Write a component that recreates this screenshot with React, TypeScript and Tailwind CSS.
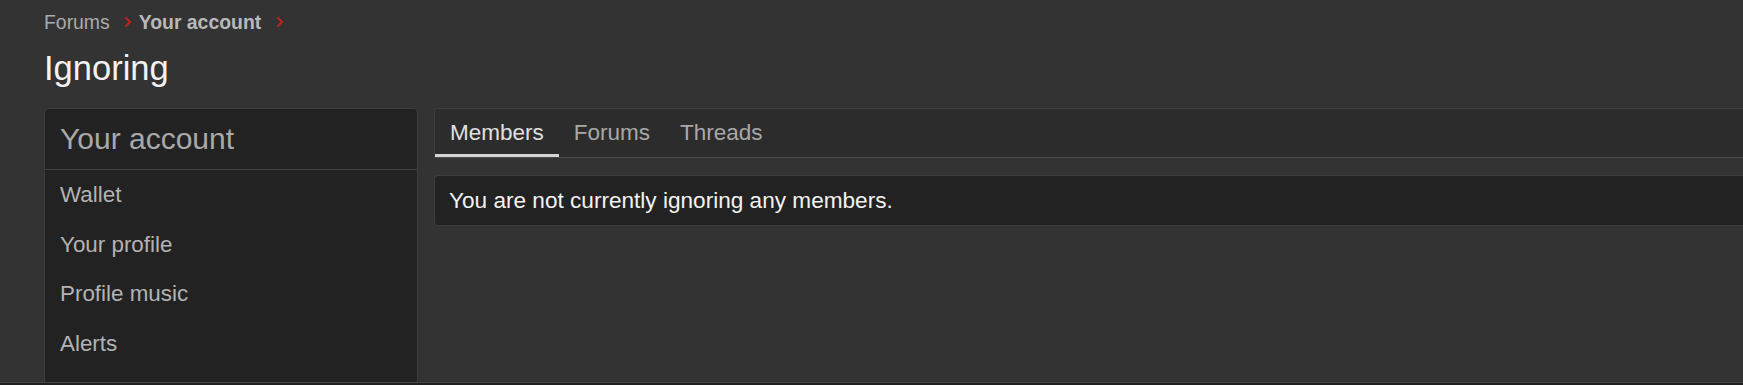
import React from 'react'

function Chevron() {
  return (
    <svg width="8" height="12" viewBox="0 0 8 12" className="inline-block">
      <path d="M1.5 1.5 L6 6 L1.5 10.5" fill="none" stroke="#c81e1e" strokeWidth="2" />
    </svg>
  )
}

const menu = ['Wallet', 'Your profile', 'Profile music', 'Alerts']

export default function App() {
  return (
    <div className="w-full h-[385px] overflow-hidden bg-[#333333] font-['Liberation_Sans',Arial,sans-serif] flex flex-col">
      <div className="h-[382px] overflow-hidden pl-[44px]">
        <div className="pt-[10px] flex items-center text-[19.4px] leading-[24px]">
          <span className="text-[#ababab]">Forums</span>
          <span className="ml-[14px] mr-[7px] flex items-center">
            <Chevron />
          </span>
          <span className="text-[#b9b9b9] font-bold">Your account</span>
          <span className="ml-[15px] flex items-center">
            <Chevron />
          </span>
        </div>
        <h1 className="mt-[14px] text-[34.5px] leading-[40px] text-[#f2f2f2]">Ignoring</h1>

        <div className="mt-[20px] flex gap-[16px] -mr-[40px]">
          <div className="w-[374px] shrink-0 bg-[#222222] border border-[#3e3e3e] rounded-[4px] h-[300px]">
            <div className="px-[15px] py-[12px] text-[30px] leading-[36px] text-[#a9a9a9] border-b border-[#3e3e3e]">
              Your account
            </div>
            <ul>
              {menu.map((m) => (
                <li key={m} className="px-[15px] py-[10px] text-[22.4px] leading-[29.5px] text-[#b3b3b3]">
                  {m}
                </li>
              ))}
            </ul>
          </div>

          <div className="flex-1 min-w-0">
            <div className="flex bg-[#2c2c2c] border-t border-l border-[#3e3e3e] border-b-[#4a4a4a] border-b rounded-tl-[4px] text-[22.5px] leading-[24px]">
              <div className="px-[15px] pt-[12px] pb-[9px] border-b-[3px] border-[#d4d4d4] text-[#e0e0e0]">Members</div>
              <div className="px-[15px] pt-[12px] pb-[9px] border-b-[3px] border-transparent text-[#a8a8a8]">Forums</div>
              <div className="px-[15px] pt-[12px] pb-[9px] border-b-[3px] border-transparent text-[#a8a8a8]">Threads</div>
            </div>
            <div className="mt-[17px] bg-[#222222] border border-[#3e3e3e] rounded-[4px] px-[14px] py-[11px] text-[22.6px] leading-[27px] text-[#f2f2f2]">
              You are not currently ignoring any members.
            </div>
          </div>
        </div>
      </div>
      <div className="flex-1 border-t border-[#474747] bg-[#1f1f1f]" />
    </div>
  )
}
